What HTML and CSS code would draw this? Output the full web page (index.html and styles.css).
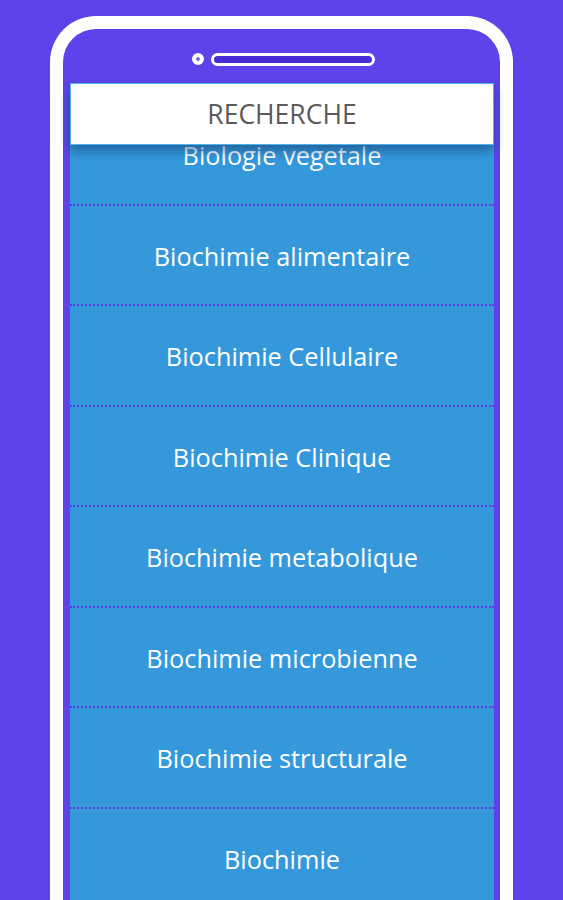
FILE: index.html
```html
<!DOCTYPE html>
<html lang="fr">
<head>
<meta charset="utf-8">
<title>Recherche</title>
<link rel="stylesheet" href="styles.css">
</head>
<body>
<div class="phone">
  <div class="phone-top">
    <span class="camera"></span>
    <span class="speaker"></span>
  </div>
  <div class="screen">
    <header class="header">RECHERCHE</header>
    <ul class="list">
      <li class="item">Biologie vegetale</li>
      <li class="item">Biochimie alimentaire</li>
      <li class="item">Biochimie Cellulaire</li>
      <li class="item">Biochimie Clinique</li>
      <li class="item">Biochimie metabolique</li>
      <li class="item">Biochimie microbienne</li>
      <li class="item">Biochimie structurale</li>
      <li class="item">Biochimie</li>
    </ul>
  </div>
</div>
</body>
</html>
```

FILE: styles.css
```css
html, body {
  margin: 0;
  padding: 0;
  height: 900px;
  overflow: hidden;
}
body {
  background: #5c43ea;
  font-family: "Open Sans", "Noto Sans", sans-serif;
  padding: 16px 50px 0 50px;
  box-sizing: border-box;
}
.phone {
  width: 463px;
  height: 900px;
  box-sizing: border-box;
  border: 13px solid #ffffff;
  border-bottom: none;
  border-radius: 46px 46px 0 0;
  padding: 0 6px 0 7px;
  display: flex;
  flex-direction: column;
}
.phone-top {
  height: 54px;
  box-sizing: border-box;
  flex: none;
  display: flex;
  align-items: center;
  justify-content: center;
  gap: 7px;
  padding-left: 3px;
  padding-top: 6px;
}
.camera {
  width: 12px;
  height: 12px;
  box-sizing: border-box;
  border-radius: 50%;
  border: 4px solid #ffffff;
  background: #7a66f0;
}
.speaker {
  width: 164px;
  height: 13px;
  box-sizing: border-box;
  border-radius: 7px;
  border: 3px solid #ffffff;
  background: #4a2cd6;
}
.screen {
  flex: 1;
  background: #3498db;
  display: flex;
  flex-direction: column;
}
.header {
  position: relative;
  z-index: 2;
  height: 62px;
  box-sizing: border-box;
  background: #ffffff;
  border: 1px solid #4fb0ea;
  display: flex;
  align-items: center;
  justify-content: center;
  font-size: 26.5px;
  color: #5a5a5a;
  box-shadow: 0 6px 10px rgba(20, 60, 110, 0.55);
}
.list {
  list-style: none;
  margin: -40px 0 0 0;
  padding: 0;
}
.item {
  height: 100.5px;
  box-sizing: border-box;
  border-bottom: 2px dotted #5a3fe3;
  display: flex;
  align-items: center;
  justify-content: center;
  color: #ffffff;
  font-size: 25.3px;
  padding-top: 2px;
}
```
